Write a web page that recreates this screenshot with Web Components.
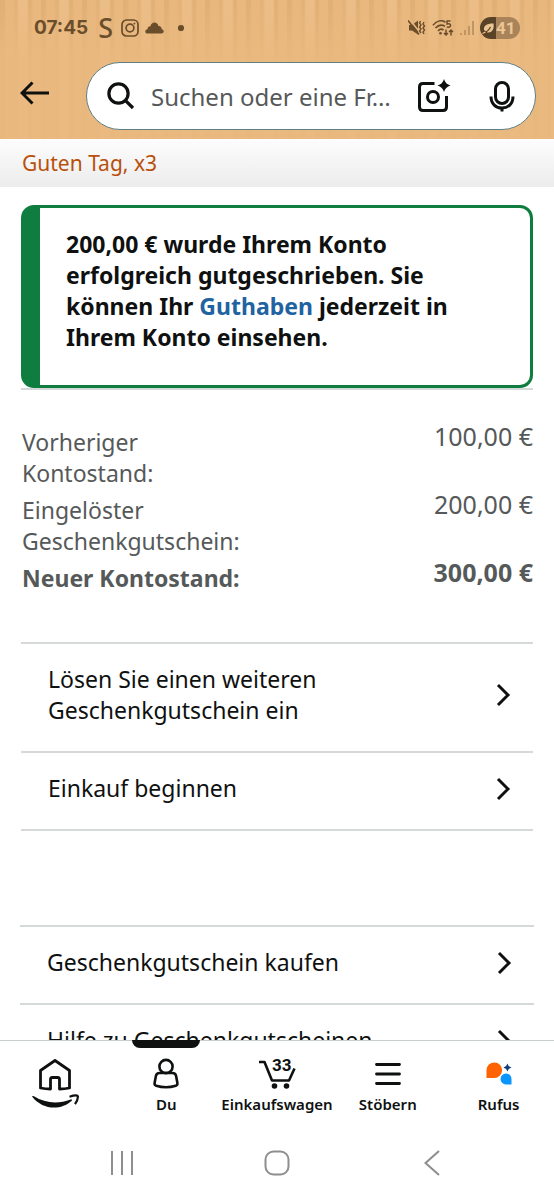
<!DOCTYPE html>
<html lang="de">
<head>
<meta charset="utf-8">
<meta name="viewport" content="width=device-width, initial-scale=1">
<title>Guthaben</title>
<style>
  body { margin: 0; background: #fff; color: #0f1111; font: 23px/31px "Noto Sans", "Open Sans", sans-serif; }
</style>
</head>
<body>
<gift-app></gift-app>
<script>
function define(name, html) {
  const tpl = document.createElement('template');
  tpl.innerHTML = '<style>*{box-sizing:border-box}:host{display:block;box-sizing:border-box}svg{display:block;flex:none}button{border:0;padding:0;margin:0;background:none;color:inherit;font:inherit}a{color:inherit;text-decoration:none}</style>' + html;
  customElements.define(name, class extends HTMLElement {
    constructor() {
      super();
      this.attachShadow({ mode: 'open' }).append(tpl.content.cloneNode(true));
    }
  });
}

define('status-bar', `
<style>
  :host { display: flex; align-items: center; justify-content: space-between; height: 56px; padding: 0 34px; color: #6a4d2b; }
  div { display: flex; align-items: center; }
  .time { font: 700 19px/24px Inter, sans-serif; margin-right: 10px; }
  .s { font: 500 27px/28px "Noto Sans", sans-serif; margin-right: 8px; }
  .insta { margin-right: 6px; }
  .cloud { margin-right: 13px; }
  .right { gap: 6px; }
  .battery { height: 22px; width: 40px; border-radius: 11px; overflow: hidden; background: linear-gradient(90deg, #5a4226 16px, #a98359 16px); color: #ecc595; font: 700 17px/22px Roboto, sans-serif; }
</style>
<div class="left">
  <span class="time">07:45</span><span class="s">S</span>
  <svg class="insta" width="18" height="18" viewBox="0 0 18 18" fill="none" stroke="currentColor" stroke-width="1.7"><rect x="1" y="1" width="16" height="16" rx="4.5"/><circle cx="9" cy="9" r="3.9"/><circle cx="13.4" cy="4.6" r=".6" fill="currentColor" stroke-width=".8"/></svg>
  <svg class="cloud" width="19" height="12" viewBox="0 0 19 12" fill="currentColor"><path d="M2.6 11.5C.9 11.5.3 10.400.3 9.400c0-1.300 1-2.100 2.200-2.200C2.500 5 4 4 5.400 4.200 6.200 1.800 7.600.6 9.500.6c2 0 3.500 1.300 4 3.400 2.200.1 3.300 1.500 3.300 3.200 1.200.2 1.900 1 1.900 2.100 0 1.300-.9 2.200-2.200 2.200z"/></svg>
  <svg width="8" height="8" viewBox="0 0 8 8"><circle cx="4" cy="4" r="3.100" fill="currentColor"/></svg>
</div>
<div class="right">
  <svg width="18" height="18" viewBox="0 0 18 18" fill="none" stroke="currentColor" stroke-width="1.600"><path d="M1 6h3l6-4.500v14L4 11.500H1z" fill="currentColor" stroke="none"/><path d="M2 1l10 12.500" stroke="#e9b87e" stroke-width="1.600"/><path d="M0 1.500l11 14"/><path d="M12.500 2l-1 2 1.500 2-1.500 2 1.500 2-1.500 2 1.500 2M16 3l-1 2 1.500 2L15 9l1.500 2-1.500 2 1 2" stroke-width="1.400"/></svg>
  <svg width="22" height="18" viewBox="0 0 22 18" fill="none" stroke="currentColor" stroke-width="1.700"><path d="M1 6.200C5 1.500 10 1 13.500 3.300M3.500 9c3-3.400 6.500-3.500 9.500-1.800M6 11.800c2-2 4-2 5.500-.8"/><circle cx="8.500" cy="14.300" r="1.300" fill="currentColor" stroke="none"/><path d="M18.500 2h-3.400v3c2-.8 3.600 0 3.400 1.700-.2 1.600-2.200 2-3.700 1.100" stroke-width="1.500"/><path d="M14 10.500v5.500m-2-2l2 2 2-2M19 16.500V11m-2 2l2-2 2 2" stroke-width="1.500"/></svg>
  <svg width="14" height="16" viewBox="0 0 14 16" stroke="#b78c5c" stroke-width="1.600"><path d="M1 15v-2M5 15v-5M9 15V6M13 15V1"/></svg>
  <div class="battery">
    <svg width="16" height="22" viewBox="0 0 16 22"><path d="M4 13c-.5-4 2-6.500 9.500-6.500.8 5-1 9.500-6 8.900z" fill="#ecc595"/><path d="M2.500 16.500C6 15.500 9 13 10.500 10" stroke="#5a4226" stroke-width="1.200" fill="none"/><path d="M2.500 16.500l3-1.500" stroke="#ecc595" stroke-width="1.200"/></svg><span>41</span>
  </div>
</div>`);

define('search-bar', `
<style>
  :host { display: flex; align-items: center; padding: 6px 18px 9px 20px; color: #0f1111; }
  .back { width: 30px; margin-right: 36px; padding-bottom: 6px; }
  form { flex: 1; min-width: 0; display: flex; align-items: center; height: 68px; padding: 0 20px; border: 1px solid #5f7f83; border-radius: 34px; background: #fff; }
  input { flex: 1; min-width: 0; border: 0; outline: 0; padding: 0; margin: 0 8px 0 16px; background: none; font: inherit; font-size: 24px; color: #0f1111; }
  input::placeholder { color: #565959; opacity: 1; }
  .cam { margin-right: 38px; }
</style>
<button class="back" aria-label="Zurück"><svg width="30" height="24" viewBox="0 0 30 24" fill="none" stroke="currentColor" stroke-width="3"><path d="M12.500 1.500L2 12l10.500 10.500M2 12h27"/></svg></button>
<form role="search">
  <svg width="28" height="28" viewBox="0 0 28 28" fill="none" stroke="currentColor" stroke-width="3.200"><circle cx="11.500" cy="11.500" r="9.600"/><path d="M18.300 18.300l7.700 7.700"/></svg>
  <input type="text" aria-label="Suchen" placeholder="Suchen oder eine Fr…">
  <button class="cam" type="button" aria-label="Kamera"><svg width="34" height="34" viewBox="0 0 34 34" fill="none" stroke="currentColor" stroke-width="3"><path d="M17.500 4.500H6Q2.500 4.500 2.500 8v20q0 3.500 3.500 3.500h20q3.500 0 3.500-3.500V17"/><circle cx="16" cy="18" r="5.500"/><path d="M27 0q1.300 5 6.500 6.500-5.200 1.500-6.500 6.500-1.300-5-6.500-6.500Q25.700 5 27 0z" fill="currentColor" stroke="none"/></svg></button>
  <button type="button" aria-label="Spracheingabe"><svg width="26" height="32" viewBox="0 0 26 32" fill="none" stroke="currentColor" stroke-width="3"><rect x="6.500" y="2.500" width="13" height="21" rx="6.500"/><path d="M2 16.500c0 7.500 5 11.500 11 11.500s11-4 11-11.500M13 28v3.500"/></svg></button>
</form>`);

define('app-header', `
<style>
  :host {
    background:
      linear-gradient(180deg, rgba(234,185,128,.1) 0, rgba(234,185,128,.85) 56px),
      repeating-linear-gradient(90deg, #dfae73 0 4px, #e8b77e 6px 13px, #e2b177 15px 17px, #ecbe88 19px 27px, #dfae73 29px 31px, #e9b87f 33px 41px);
    background-color: #eab980;
  }
</style>
<slot></slot>`);

define('greeting-strip', `
<style>
  :host { padding: 9px 22px 8px; font-size: 21px; color: #b8500c; background: linear-gradient(#fdfdfd, #ececec); }
</style>
<slot></slot>`);

define('success-card', `
<style>
  :host { margin: 18px 21px 0; border-bottom: 2px solid #d5d9d9; }
  section { border: 3px solid #0f7d3f; border-left-width: 19px; border-radius: 13px; padding: 21px 72px 32px 26px; font-weight: 700; background: #fff; }
  p { margin: 0; }
  a { color: #2162a1; }
</style>
<section role="status"><p><slot name="before"></slot> <a href="#"><slot name="link"></slot></a> <slot name="after"></slot></p></section>`);

define('balance-table', `
<style>
  :host { margin: 31px 21px 48px 22px; color: #565959; }
  table { width: 100%; border-collapse: collapse; }
  th, td { padding: 0; vertical-align: top; font-weight: 400; }
  th { width: 45%; padding-top: 6px; text-align: left; }
  td { text-align: right; font-size: 25px; }
  .total > * { font-weight: 700; }
</style>
<table>
  <tr><th scope="row">Vorheriger Kontostand:</th><td>100,00 €</td></tr>
  <tr><th scope="row">Eingelöster Geschenkgutschein:</th><td>200,00 €</td></tr>
  <tr class="total"><th scope="row">Neuer Kontostand:</th><td>300,00 €</td></tr>
</table>`);

define('link-list', `
<style>
  :host { margin: 0 21px; border-top: 2px solid #d5d9d9; }
  :host([wide]) { margin: 94px 20px 0; }
</style>
<slot></slot>`);

define('link-row', `
<style>
  :host { border-bottom: 2px solid #d5d9d9; }
  a { display: flex; align-items: center; justify-content: space-between; padding: 20px 22px 25px 27px; }
  span { max-width: 340px; }
</style>
<a href="#"><span><slot></slot></span>
<svg width="15" height="24" viewBox="0 0 15 24" fill="none" stroke="currentColor" stroke-width="3"><path d="M2 2l10 10L2 22"/></svg></a>`);

define('tab-item', `
<style>
  :host { flex: 1 1 0; min-width: 0; position: relative; }
  :host([active])::before { content: ""; position: absolute; top: -1px; left: 50%; width: 68px; height: 8px; margin-left: -34px; background: #0f1111; border-radius: 0 0 8px 8px; }
  a { display: flex; flex-direction: column; align-items: center; padding-top: 14px; font: 600 15px/20px "Noto Sans", sans-serif; white-space: nowrap; }
  .icon { display: flex; justify-content: center; min-height: 39px; }
</style>
<a href="#"><span class="icon"><slot name="icon"></slot></span><slot></slot></a>`);

define('tab-bar', `
<style>
  :host { display: flex; height: 85px; border-top: 1px solid #c9cfcf; background: #fff; }
</style>
<tab-item aria-label="Startseite"><svg slot="icon" width="48" height="54" viewBox="0 0 48 54" fill="none" stroke="currentColor" stroke-width="2.800"><path d="M9.500 15.500L24 5.500l14.500 10v17.500q-5 1-10 1v-9.500q0-2-2-2h-5q-2 0-2 2V34q-5 0-10-1z" stroke-linejoin="round"/><path d="M1 41.500Q1.500 40.500 3 41.300C14 48.500 28 49 39.500 44.500q1.800-.6 1.300 1.200C30 55.500 12 55.500 1 41.500z" fill="currentColor" stroke="none"/><path d="M38.500 41.700q7-2.200 8.300-.6.500 3.400-2.800 8" stroke-width="2.200"/></svg></tab-item>
<tab-item active><svg slot="icon" width="30" height="36" viewBox="0 0 30 36" fill="none" stroke="currentColor" stroke-width="2.600"><circle cx="15" cy="11.500" r="6.600"/><path d="M10 18H8.500q-3 0-3.600 3L3.600 28q-.3 2.200 1.600 2.800 4.800 1.500 9.800 1.500t9.800-1.500q1.900-.6 1.600-2.800l-1.300-7q-.6-3-3.600-3H10" stroke-linejoin="round"/></svg>Du</tab-item>
<tab-item><cart-icon slot="icon"></cart-icon>Einkaufswagen</tab-item>
<tab-item><svg slot="icon" width="28" height="36" viewBox="0 0 28 36" stroke="currentColor" stroke-width="2.800" stroke-linecap="round"><path d="M2.500 9.500h23M2.500 19h23M2.500 28.500h23"/></svg>Stöbern</tab-item>
<tab-item><svg slot="icon" width="28" height="36" viewBox="0 0 28 36"><path d="M1.500 23V15a7.800 7.800 0 1 1 7.800 8z" fill="#ff6200"/><path d="M26.500 29.500V24.300a5.500 5.500 0 1 0-5.500 5.200z" fill="#0a95ff"/><path d="M22.500 8.500q.8 3.200 4 4-3.200.8-4 4-.8-3.200-4-4 3.200-.8 4-4z" fill="#123f7a"/></svg>Rufus</tab-item>`);

define('cart-icon', `
<style>
  :host { position: relative; width: 38px; height: 36px; }
  span { position: absolute; left: 14px; top: 0; font: 700 17px/20px Roboto, sans-serif; }
</style>
<svg width="38" height="36" viewBox="0 0 38 36" fill="none" stroke="currentColor" stroke-width="2.600"><path d="M1 7h5.500L14 25.500h17L36.500 13.500" stroke-linejoin="round"/><circle cx="16.500" cy="31" r="2.800" fill="currentColor" stroke="none"/><circle cx="28.500" cy="31" r="2.800" fill="currentColor" stroke="none"/></svg><span>33</span>`);

define('system-bar', `
<style>
  :host { display: flex; height: 75px; padding: 0 44px; background: #fff; color: #8e8e8e; }
  button { flex: 1; display: flex; align-items: center; justify-content: center; }
</style>
<button aria-label="Letzte Apps"><svg width="24" height="24" viewBox="0 0 24 24" stroke="currentColor" stroke-width="2"><path d="M2 0v24M12 0v24M22 0v24"/></svg></button>
<button aria-label="Startbildschirm"><svg width="26" height="26" viewBox="0 0 26 26" fill="none" stroke="currentColor" stroke-width="2"><rect x="1.500" y="1.500" width="23" height="23" rx="8"/></svg></button>
<button aria-label="Zurück"><svg width="16" height="26" viewBox="0 0 16 26" fill="none" stroke="currentColor" stroke-width="2"><path d="M15 1L1.500 13 15 25"/></svg></button>`);

define('gift-app', `
<style>
  :host { display: flex; flex-direction: column; height: 100vh; }
  app-header, tab-bar, system-bar { flex: none; }
  main { flex: 1; min-height: 0; overflow-y: auto; scrollbar-width: none; }
</style>
<app-header><status-bar></status-bar><search-bar></search-bar></app-header>
<main>
  <greeting-strip>Guten Tag, x3</greeting-strip>
  <success-card>
    <span slot="before">200,00 € wurde Ihrem Konto erfolgreich gutgeschrieben. Sie können Ihr</span>
    <span slot="link">Guthaben</span>
    <span slot="after">jederzeit in Ihrem Konto einsehen.</span>
  </success-card>
  <balance-table></balance-table>
  <link-list>
    <link-row>Lösen Sie einen weiteren Geschenkgutschein ein</link-row>
    <link-row>Einkauf beginnen</link-row>
  </link-list>
  <link-list wide>
    <link-row>Geschenkgutschein kaufen</link-row>
    <link-row>Hilfe zu Geschenkgutscheinen</link-row>
  </link-list>
</main>
<tab-bar></tab-bar>
<system-bar></system-bar>`);
</script>
</body>
</html>
